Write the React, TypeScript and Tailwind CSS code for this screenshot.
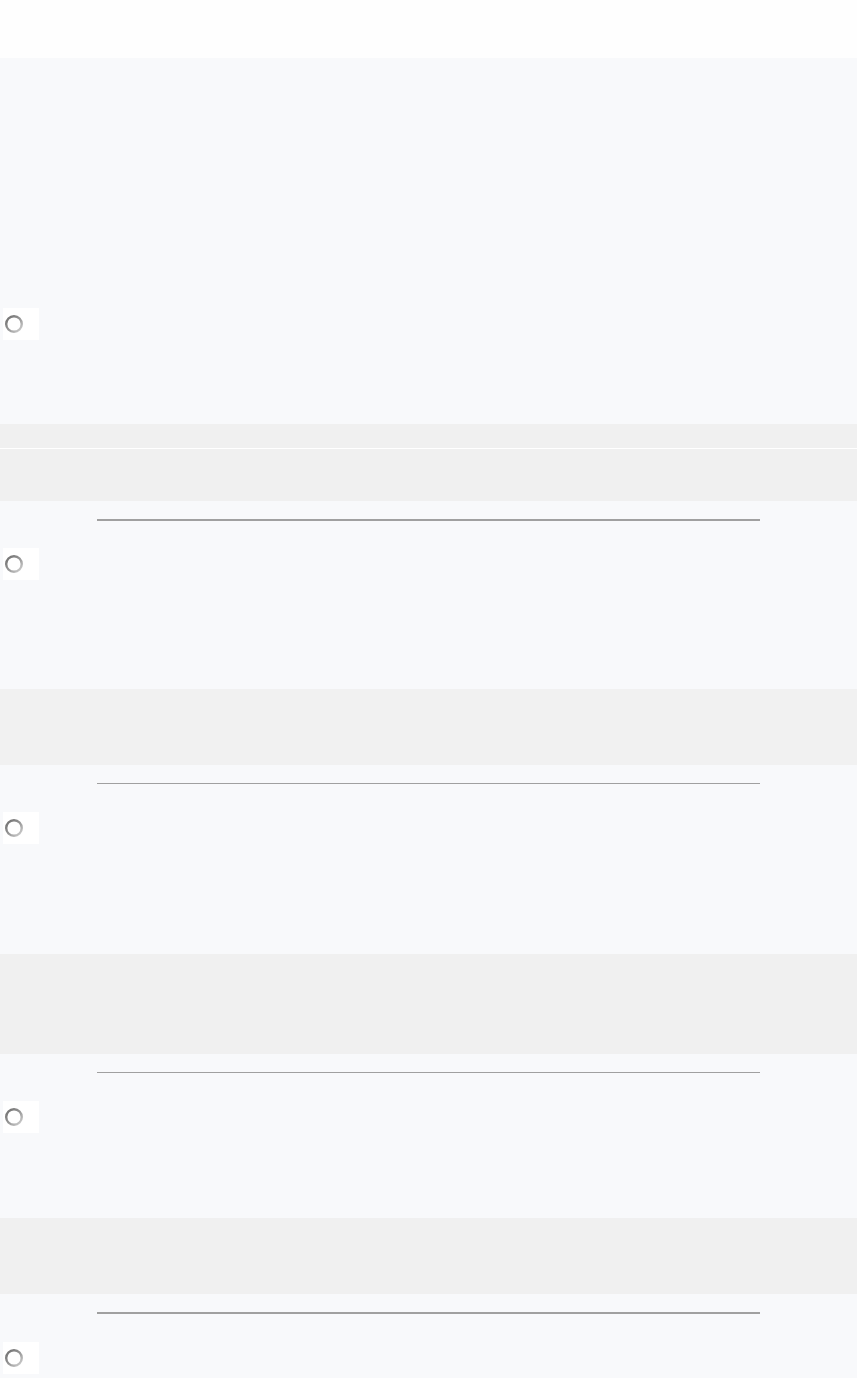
const Radio = () => (
  <div className="ml-[3px] flex h-[32px] w-[36px] items-center bg-white">
    <svg width="20" height="20" viewBox="0 0 20 20" className="ml-[1px]" aria-hidden="true">
      <defs>
        <linearGradient id="ring" x1="0" y1="0" x2="1" y2="1">
          <stop offset="0%" stopColor="#6e6e6e" />
          <stop offset="50%" stopColor="#959595" />
          <stop offset="100%" stopColor="#d4d4d4" />
        </linearGradient>
      </defs>
      <circle cx="10" cy="10" r="7.8" fill="#ffffff" stroke="url(#ring)" strokeWidth="2.4" />
    </svg>
  </div>
);

interface SectionProps {
  height: string;
  lineClass: string;
  radioTop: string;
}

const Section = ({ height, lineClass, radioTop }: SectionProps) => (
  <div className={`flex flex-col bg-[#f8f9fb] ${height}`}>
    <div className={`ml-[97px] mt-[18px] w-[663px] bg-[#a0a0a0] ${lineClass}`} />
    <div className={radioTop}>
      <Radio />
    </div>
  </div>
);

export default function App() {
  return (
    <div className="flex min-h-[1378px] w-full flex-col bg-[#f8f9fb] font-['Liberation_Sans',sans-serif]">
      <div className="h-[58px] bg-[#fefefe]" />

      <div className="flex h-[366px] flex-col bg-[#f8f9fb] pt-[250px]">
        <Radio />
      </div>

      <div className="flex h-[77px] flex-col bg-[#f0f0f0]">
        <div className="h-[24px]" />
        <div className="h-[1px] bg-white" />
      </div>

      <Section height="h-[188px]" lineClass="h-[2px]" radioTop="mt-[27px]" />
      <div className="h-[76px] bg-[#f1f1f1]" />

      <Section height="h-[189px]" lineClass="h-[1px]" radioTop="mt-[28px]" />
      <div className="h-[100px] bg-[#f0f0f0]" />

      <Section height="h-[164px]" lineClass="h-[1px]" radioTop="mt-[28px]" />
      <div className="h-[76px] bg-[#f0f0f0]" />

      <Section height="h-[84px]" lineClass="h-[2px]" radioTop="mt-[28px]" />
    </div>
  );
}
